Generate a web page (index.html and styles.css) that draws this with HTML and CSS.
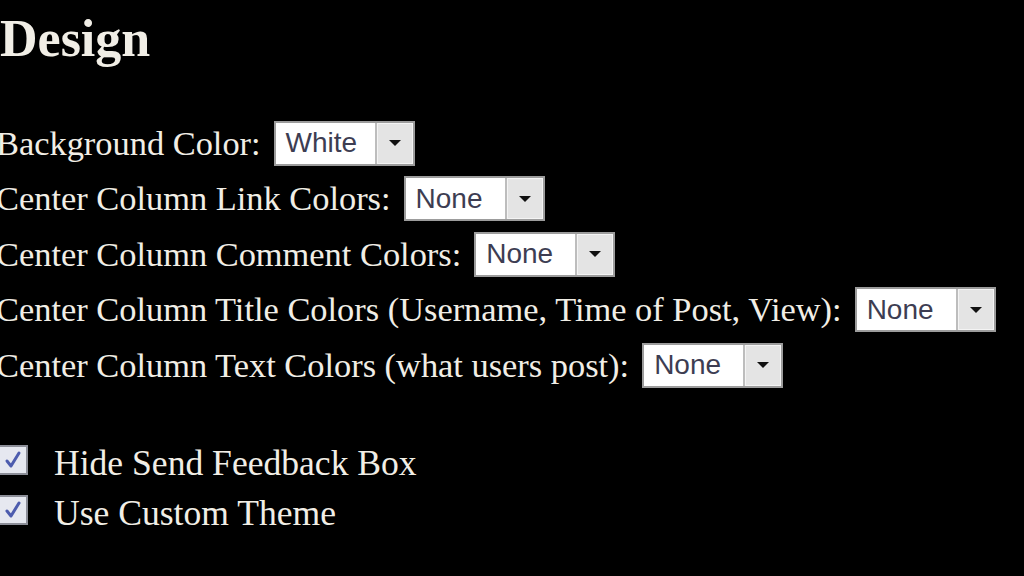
FILE: index.html
```html
<!DOCTYPE html>
<html lang="en">
<head>
<meta charset="utf-8">
<title>Design</title>
<link rel="stylesheet" href="styles.css">
</head>
<body>
<div class="page">
  <h1 class="title">Design</h1>
  <div class="fields">
    <div class="field">
      <span class="label">Background Color:</span>
      <span class="select"><span class="select-value">White</span><span class="select-btn"><span class="arrow"></span></span></span>
    </div>
    <div class="field">
      <span class="label">Center Column Link Colors:</span>
      <span class="select"><span class="select-value">None</span><span class="select-btn"><span class="arrow"></span></span></span>
    </div>
    <div class="field">
      <span class="label">Center Column Comment Colors:</span>
      <span class="select"><span class="select-value">None</span><span class="select-btn"><span class="arrow"></span></span></span>
    </div>
    <div class="field">
      <span class="label">Center Column Title Colors (Username, Time of Post, View):</span>
      <span class="select"><span class="select-value">None</span><span class="select-btn"><span class="arrow"></span></span></span>
    </div>
    <div class="field">
      <span class="label">Center Column Text Colors (what users post):</span>
      <span class="select"><span class="select-value">None</span><span class="select-btn"><span class="arrow"></span></span></span>
    </div>
  </div>
  <div class="checks">
    <div class="check">
      <svg class="box" width="30" height="30" viewBox="0 0 30 30"><rect x="1" y="1" width="28" height="28" fill="#e6e8f0" stroke="#8c8e98" stroke-width="2"/><path d="M9 16 L13 21 L21 8" fill="none" stroke="#4d5cae" stroke-width="3" stroke-linecap="round" stroke-linejoin="round"/></svg>
      <span class="check-label">Hide Send Feedback Box</span>
    </div>
    <div class="check">
      <svg class="box" width="30" height="30" viewBox="0 0 30 30"><rect x="1" y="1" width="28" height="28" fill="#e6e8f0" stroke="#8c8e98" stroke-width="2"/><path d="M9 16 L13 21 L21 8" fill="none" stroke="#4d5cae" stroke-width="3" stroke-linecap="round" stroke-linejoin="round"/></svg>
      <span class="check-label">Use Custom Theme</span>
    </div>
  </div>
</div>
</body>
</html>
```

FILE: styles.css
```css
html, body {
  margin: 0;
  padding: 0;
  background: #000;
}

body {
  width: 1024px;
  height: 576px;
  overflow: hidden;
  color: #f1eee6;
  font-family: "Liberation Serif", "Times New Roman", serif;
}

.page {
  padding-top: 13px;
  margin-left: -2px;
}

.title {
  margin: 0 0 0 2px;
  font-size: 52px;
  line-height: 52px;
  font-weight: bold;
}

.fields {
  display: flex;
  flex-direction: column;
  gap: 10.5px;
  margin-top: 55.5px;
  margin-left: -2px;
}

.field {
  display: flex;
  align-items: center;
  gap: 13px;
  height: 45px;
}

.label {
  font-size: 34.4px;
  line-height: 1;
  white-space: nowrap;
}

.select {
  display: flex;
  width: 141px;
  height: 45px;
  box-sizing: border-box;
  border: 2px solid #9c9c9c;
  background: #fff;
}

.select-value {
  flex: 1;
  display: flex;
  align-items: center;
  padding-left: 10px;
  font-family: "Liberation Sans", Arial, sans-serif;
  font-size: 28px;
  color: #3d3d52;
}

.select-btn {
  width: 36px;
  display: flex;
  align-items: center;
  justify-content: center;
  background: #e4e4e4;
  border-left: 2px solid #bdbdbd;
  box-shadow: inset 0 0 0 1px #f4f4f4;
}

.arrow {
  width: 0;
  height: 0;
  border-left: 6px solid transparent;
  border-right: 6px solid transparent;
  border-top: 6px solid #111;
}

.checks {
  display: flex;
  flex-direction: column;
  gap: 14px;
  margin-top: 57px;
}

.check {
  display: flex;
  align-items: baseline;
  gap: 26px;
}

.box {
  flex: none;
}

.check-label {
  font-size: 35.6px;
  line-height: 36px;
  white-space: nowrap;
}
```
